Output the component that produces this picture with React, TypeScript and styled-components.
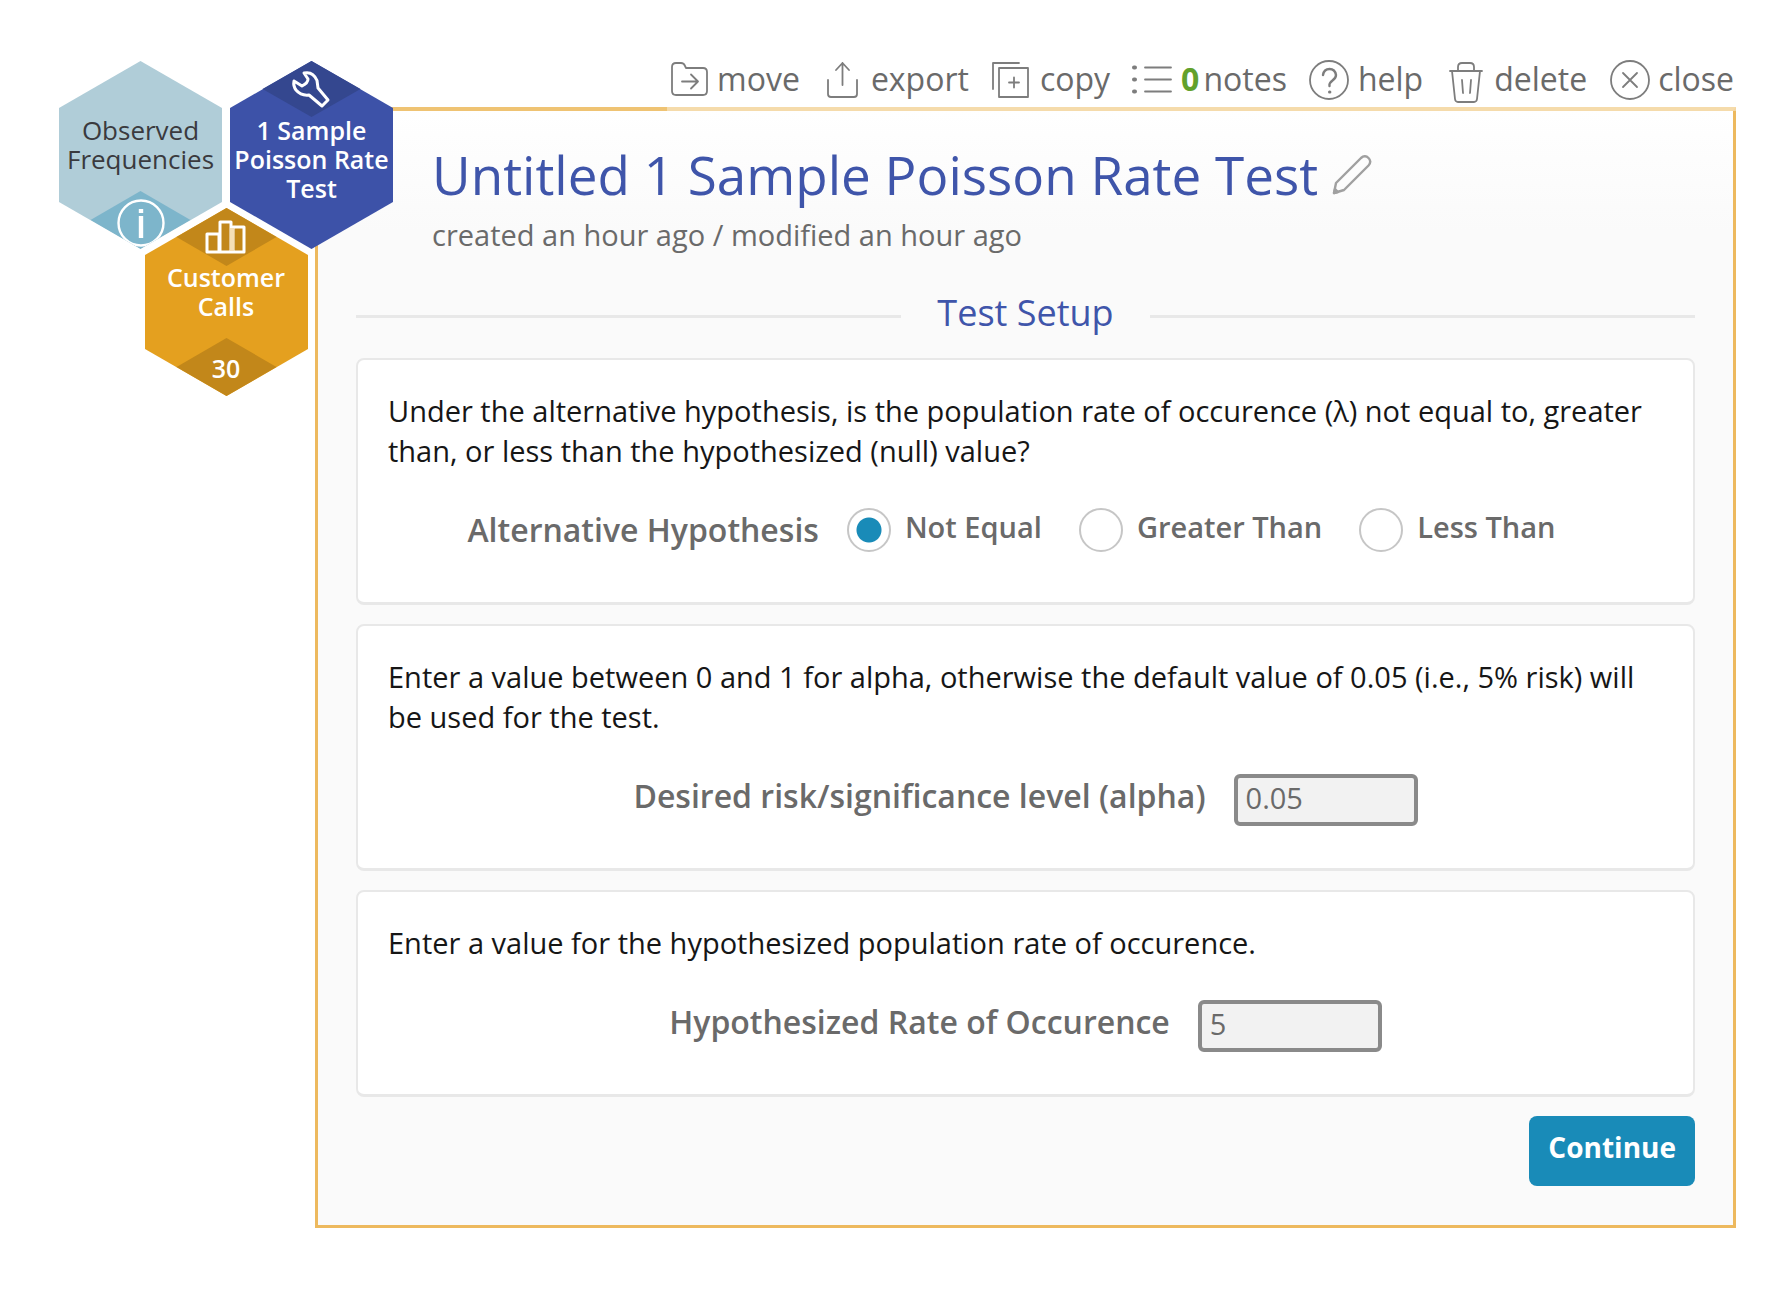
import React, { useState } from "react";
import styled, { createGlobalStyle } from "styled-components";

const GlobalStyle = createGlobalStyle`
  * { box-sizing: border-box; }
  body {
    margin: 0;
    background: #fff;
    font-family: "Open Sans", "Noto Sans", sans-serif;
    color: #6a6a6a;
  }
  button, input { font-family: inherit; }
`;

const Page = styled.div`
  display: flex;
  align-items: flex-start;
  padding: 61px 56px 70px 59px;
`;

/* ---------- hexagon navigation ---------- */

const HexCluster = styled.nav`
  flex: none;
  position: relative;
  z-index: 2;
  width: 334px;
  margin-right: -78px;
  display: flex;
  flex-direction: column;
  align-items: center;
`;

const HexRow = styled.div`
  display: flex;
  justify-content: space-between;
  width: 100%;
`;

const HexButton = styled.button<{ $strong?: boolean; $nested?: boolean }>`
  position: relative;
  width: 163px;
  height: 188px;
  margin: ${(p) => (p.$nested ? "-41px 0 0" : "0")};
  padding: 55px 0 0;
  border: 0;
  background: none;
  color: ${(p) => (p.$strong ? "#fff" : "#3a3a3e")};
  font-size: ${(p) => (p.$strong ? "25px" : "26px")};
  font-weight: ${(p) => (p.$strong ? 600 : 400)};
  line-height: 29px;
  display: flex;
  flex-direction: column;
  align-items: center;
  cursor: pointer;
`;

const HexShape = styled.svg`
  position: absolute;
  inset: 0;
  width: 100%;
  height: 100%;
  overflow: visible;
`;

const HexLabel = styled.span`
  position: relative;
  white-space: pre;
`;

const HexCount = styled.span`
  position: absolute;
  bottom: 13px;
  left: 0;
  right: 0;
`;

const HEX = "81.5,0 163,47 163,141 81.5,188 0,141 0,47";

/* ---------- main column ---------- */

const Main = styled.main`
  flex: 1;
  min-width: 0;
  display: flex;
  flex-direction: column;
`;

const Toolbar = styled.div`
  align-self: flex-end;
  position: relative;
  z-index: 1;
  display: flex;
  gap: 23px;
  height: 50px;
  margin-bottom: -4px;
  padding: 0 2px;
  background: rgba(255, 255, 255, 0.4);
`;

const ToolButton = styled.button`
  display: flex;
  align-items: flex-start;
  gap: 8px;
  height: 40px;
  padding: 0;
  border: 0;
  background: none;
  color: #6a6a6a;
  font-size: 32px;
  line-height: 36px;
  cursor: pointer;

  svg {
    flex: none;
    width: 40px;
    height: 44px;
    overflow: visible;
    fill: none;
    stroke: #7d7d7d;
    stroke-width: 1.8;
    stroke-linecap: round;
    stroke-linejoin: round;
  }
`;

const NoteCount = styled.span`
  color: #62a12c;
  font-weight: 700;
  margin-right: 4px;
`;

const Panel = styled.section`
  border: 3px solid #edb95e;
  border-top: 4px solid #efc373;
  background: linear-gradient(#ffffff, #fafafa 120px);
  padding: 28px 38px 39px;
`;

const Heading = styled.header`
  padding: 0 76px;
`;

const TitleRow = styled.div`
  display: flex;
  align-items: center;
  gap: 14px;
`;

const Title = styled.h1`
  margin: 0;
  font-size: 53px;
  font-weight: 400;
  line-height: 72px;
  color: #3f55aa;
`;

const EditButton = styled.button`
  padding: 0;
  border: 0;
  background: none;
  width: 40px;
  height: 40px;
  cursor: pointer;
`;

const Meta = styled.p`
  margin: 4px 0 0;
  font-size: 29px;
  line-height: 40px;
`;

const SectionHeading = styled.h2`
  display: flex;
  align-items: center;
  gap: 36px;
  margin: 34px 0 21px;
  font-size: 36px;
  font-weight: 400;
  line-height: 48px;
  color: #3f55aa;

  &::before,
  &::after {
    content: "";
    flex: 1;
    height: 3px;
    margin-top: 6px;
    background: #e8e8e8;
  }
`;

const Form = styled.form`
  display: flex;
  flex-direction: column;
  gap: 19px;
`;

const Card = styled.section`
  border: 2px solid #e8e8e8;
  border-bottom-width: 3px;
  border-radius: 8px;
  background: #fff;
  padding: 31px 30px 42px;
`;

const Prompt = styled.p`
  margin: 0 0 37px;
  font-size: 29px;
  line-height: 40px;
  color: #161616;
`;

const ControlRow = styled.div`
  display: flex;
  align-items: flex-start;
  justify-content: center;
  gap: 28px;
  height: 52px;
`;

const FieldLabel = styled.label`
  font-size: 32px;
  font-weight: 600;
  line-height: 44px;
`;

const Options = styled.div`
  display: flex;
  gap: 37px;
  padding-right: 28px;
`;

const Option = styled.label`
  display: flex;
  align-items: flex-start;
  gap: 14px;
  font-size: 29px;
  font-weight: 600;
  line-height: 38px;
  cursor: pointer;
`;

const Radio = styled.input`
  appearance: none;
  flex: none;
  width: 44px;
  height: 44px;
  margin: 0;
  border: 2px solid #c6c6c6;
  border-radius: 50%;
  background: #fff;

  &:checked {
    background: radial-gradient(circle, #198bb8 12px, #fff 13px);
  }
`;

const TextField = styled.input`
  width: 184px;
  height: 52px;
  padding: 0 8px 6px;
  border: 4px solid #8a8a8a;
  border-radius: 6px;
  background: #f2f2f2;
  color: #6a6a6a;
  font-size: 29px;
`;

const ContinueButton = styled.button`
  align-self: flex-end;
  height: 70px;
  padding: 0 19px 8px;
  border: 0;
  border-radius: 8px;
  background: #198bb8;
  color: #fff;
  font-size: 28px;
  font-weight: 700;
  cursor: pointer;
`;

const MoveIcon = () => (
  <svg viewBox="0 0 40 44" aria-hidden="true">
    <path d="M3 30V6q0-4 4-4h5q3 0 4 3l1 2h17q4 0 4 4v19q0 4-4 4H7q-4 0-4-4z" />
    <path d="M13 20.500h16M22 13.500l7 7-7 7" />
  </svg>
);
const ExportIcon = () => (
  <svg viewBox="0 0 40 44" aria-hidden="true">
    <path d="M5 19v14q0 3 3 3h23q3 0 3-3V19" />
    <path d="M19.500 24V2M13 9l6.500-7 6.500 7" />
  </svg>
);
const CopyIcon = () => (
  <svg viewBox="0 0 40 44" aria-hidden="true">
    <path d="M1 28V2h26" />
    <path d="M7 7h29v29H7z" />
    <path d="M17 21.500h10M22 16.500v10" />
  </svg>
);
const NotesIcon = () => (
  <svg viewBox="0 0 40 44" aria-hidden="true">
    <path d="M12 6.500h26M12 18.500h26M12 30.500h26" />
    <path d="M1 6.500h1M1 18.500h1M1 30.500h1" strokeWidth="4" />
  </svg>
);
const HelpIcon = () => (
  <svg viewBox="0 0 40 44" aria-hidden="true">
    <circle cx="19" cy="19" r="19" />
    <path d="M13 14q1-6 6.500-6t6.500 6q0 3-3.500 5.500T19.500 25" strokeWidth="2.400" />
    <path d="M19.500 31h.4" strokeWidth="3" />
  </svg>
);
const TrashIcon = () => (
  <svg viewBox="0 0 40 44" aria-hidden="true">
    <path d="M4 10h32M12 10V6q0-4 4-4h8q4 0 4 4v4" />
    <path d="M6 10l3 28q.4 3 3 3h16q2.600 0 3-3l3-28" />
    <path d="M16 19l1 13M25 19l-1 13" />
  </svg>
);
const CloseIcon = () => (
  <svg viewBox="0 0 40 44" aria-hidden="true">
    <circle cx="20" cy="19" r="19" />
    <path d="M13 12l14 14M27 12L13 26" />
  </svg>
);
const PencilIcon = () => (
  <svg width="40" height="40" viewBox="0 0 40 40" fill="none" stroke="#a0a0a0" strokeWidth="2.400" strokeLinejoin="round" aria-hidden="true">
    <path d="M2 38l2-10L29 3q4-3.500 7.500 0t0 7.500L12 35z" />
    <path d="M2 38l1-4 3 3z" fill="#a0a0a0" />
  </svg>
);

const choices = ["Not Equal", "Greater Than", "Less Than"];

export default function App() {
  const [choice, setChoice] = useState(choices[0]);
  const [alpha, setAlpha] = useState("0.05");
  const [rate, setRate] = useState("5");

  return (
    <>
      <GlobalStyle />
      <Page>
        <HexCluster aria-label="Analysis map">
          <HexRow>
            <HexButton>
              <HexShape viewBox="0 0 163 188" aria-hidden="true">
                <clipPath id="hexClip"><polygon points={HEX} /></clipPath>
                <polygon points={HEX} fill="#b0cdd8" />
                <g clipPath="url(#hexClip)">
                  <polygon points="81.500,130 131.500,159 81.500,188 31.500,159" fill="#7db5cb" />
                  <circle cx="82" cy="162" r="22.500" fill="none" stroke="#fff" strokeWidth="2.400" />
                  <path d="M82 155v22M82 148v4" stroke="#fff" strokeWidth="4.400" />
                </g>
              </HexShape>
              <HexLabel>{"Observed\nFrequencies"}</HexLabel>
            </HexButton>
            <HexButton $strong>
              <HexShape viewBox="0 0 163 188" aria-hidden="true">
                <polygon points={HEX} fill="#3d52a8" />
                <polygon points="81.500,0 130.500,28 81.500,56 32.500,28" fill="#34478f" />
                <path
                  d="M74 12q9-2 13 7.500l1 7.500 10 12-6 6-13-11q-8 1-13-5-3-4-2-9l8 5q6-3 6-7z"
                  fill="none"
                  stroke="#fff"
                  strokeWidth="3"
                  strokeLinejoin="round"
                />
              </HexShape>
              <HexLabel>{"1 Sample\nPoisson Rate\nTest"}</HexLabel>
            </HexButton>
          </HexRow>
          <HexButton $strong $nested>
            <HexShape viewBox="0 0 163 188" aria-hidden="true">
              <polygon points={HEX} fill="#fff" stroke="#fff" strokeWidth="9" />
              <polygon points={HEX} fill="#e4a01f" />
              <polygon points="81.500,0 131.500,29 81.500,58 31.500,29" fill="#c2871a" />
              <polygon points="81.500,130 131.500,159 81.500,188 31.500,159" fill="#c2871a" />
              <path d="M62 26h12v18H62zM75 14h11v30H75zM88 19h11v25H88z" fill="none" stroke="#fff" strokeWidth="3" strokeLinejoin="round" />
              <path d="M87 20v23" stroke="#f5dfb8" strokeWidth="4" />
            </HexShape>
            <HexLabel>{"Customer\nCalls"}</HexLabel>
            <HexCount>30</HexCount>
          </HexButton>
        </HexCluster>

        <Main>
          <Toolbar role="toolbar" aria-label="Actions">
            <ToolButton><MoveIcon />move</ToolButton>
            <ToolButton><ExportIcon />export</ToolButton>
            <ToolButton><CopyIcon />copy</ToolButton>
            <ToolButton><NotesIcon /><span><NoteCount>0</NoteCount>notes</span></ToolButton>
            <ToolButton><HelpIcon />help</ToolButton>
            <ToolButton><TrashIcon />delete</ToolButton>
            <ToolButton><CloseIcon />close</ToolButton>
          </Toolbar>

          <Panel>
            <Heading>
              <TitleRow>
                <Title>Untitled 1 Sample Poisson Rate Test</Title>
                <EditButton aria-label="Rename"><PencilIcon /></EditButton>
              </TitleRow>
              <Meta>created an hour ago / modified an hour ago</Meta>
            </Heading>

            <SectionHeading>Test Setup</SectionHeading>

            <Form onSubmit={(e) => e.preventDefault()}>
              <Card>
                <Prompt>
                  Under the alternative hypothesis, is the population rate of occurence (λ) not equal to,
                  greater than, or less than the hypothesized (null) value?
                </Prompt>
                <ControlRow role="radiogroup" aria-labelledby="alt-label">
                  <FieldLabel as="span" id="alt-label">Alternative Hypothesis</FieldLabel>
                  <Options>
                    {choices.map((c) => (
                      <Option key={c}>
                        <Radio type="radio" name="alternative" checked={choice === c} onChange={() => setChoice(c)} />
                        {c}
                      </Option>
                    ))}
                  </Options>
                </ControlRow>
              </Card>

              <Card>
                <Prompt>
                  Enter a value between 0 and 1 for alpha, otherwise the default value of 0.05 (i.e., 5%
                  risk) will be used for the test.
                </Prompt>
                <ControlRow>
                  <FieldLabel htmlFor="alpha">Desired risk/significance level (alpha)</FieldLabel>
                  <TextField id="alpha" value={alpha} onChange={(e) => setAlpha(e.target.value)} />
                </ControlRow>
              </Card>

              <Card>
                <Prompt>Enter a value for the hypothesized population rate of occurence.</Prompt>
                <ControlRow>
                  <FieldLabel htmlFor="rate">Hypothesized Rate of Occurence</FieldLabel>
                  <TextField id="rate" value={rate} onChange={(e) => setRate(e.target.value)} />
                </ControlRow>
              </Card>

              <ContinueButton type="submit">Continue</ContinueButton>
            </Form>
          </Panel>
        </Main>
      </Page>
    </>
  );
}
